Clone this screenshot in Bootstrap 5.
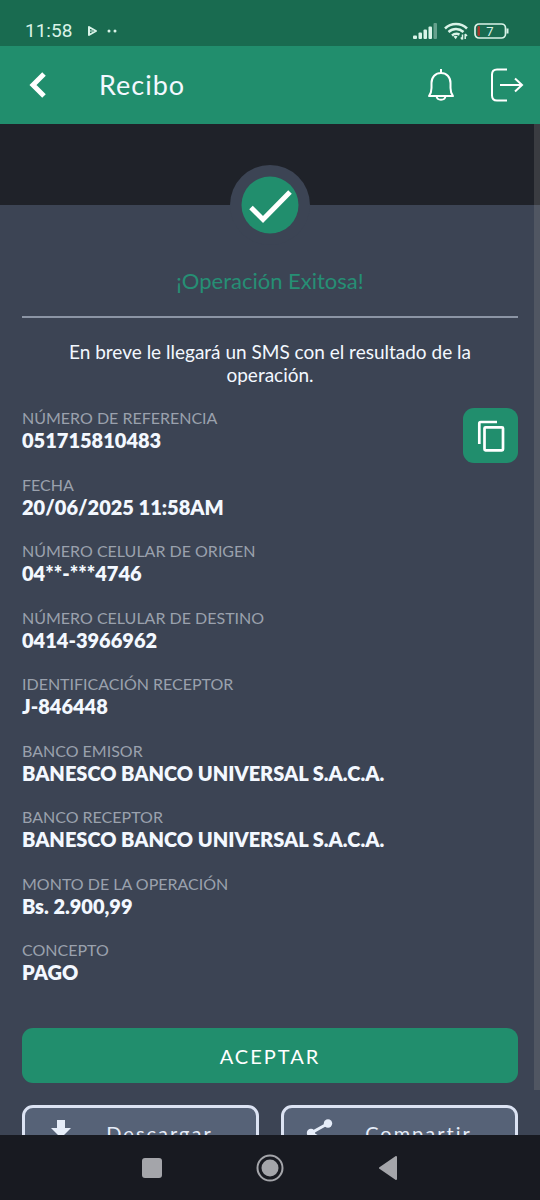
<!DOCTYPE html>
<html lang="es">
<head>
<meta charset="utf-8">
<meta name="viewport" content="width=device-width, initial-scale=1">
<title>Recibo</title>
<link href="https://cdn.jsdelivr.net/npm/bootstrap@5.3.0/dist/css/bootstrap.min.css" rel="stylesheet">
<style>
  body { font-family: Lato, sans-serif; background: #3c4454; color: #f3f8ff; }
  svg { display: block; flex: none; }
  .status-bar { height: 46px; padding: 16px 30px 0 25px; background: #196b50; color: #d9f3e8; font: 400 19px/30px Roboto, sans-serif; }
  .signals { gap: 5px; }
  .app-bar { height: 78px; padding: 0 15px 0 21px; background: #218e6d; }
  .app-bar h1 { font-size: 27px; line-height: 32px; margin-left: 44px; letter-spacing: 1px; font-weight: 400; }
  .app-bar .btn { color: #fff; border: 0; }
  .app-actions { gap: 34px; }
  .scroll-area { overflow-y: auto; scrollbar-width: none; }
  .scroll-area::-webkit-scrollbar { display: none; }
  .receipt { min-height: calc(100% + 25px); }
  .band { height: 81px; background: #1f2229; }
  .sheet { padding: 63px 22px 0; background: #3c4454; }
  .seal { top: -40px; width: 80px; height: 80px; background: #3c4454; }
  .success { font-size: 22px; line-height: 26px; color: #268f74; font-weight: 400; }
  .rule { margin: 22px 0; border-top: 2px solid #8c95a5; opacity: 1; }
  .notice { font-size: 19px; line-height: 23px; }
  .gap-base { margin-top: 22px; }
  .details dt { font-size: 16px; line-height: 20px; font-weight: 400; color: #9aa1ad; }
  .details dd { font-size: 20px; line-height: 24px; font-weight: 800; margin: 0; }
  .copy-btn { width: 55px; height: 55px; border-radius: 11px; background: #218e6d; color: #fff; top: 0; right: 0; }
  .main-btn { height: 55px; border-radius: 11px; letter-spacing: 2px; font-size: 20px; color: #fff; background: #218e6d; margin-top: 44px; }
  .side-btns { --bs-gutter-x: 22px; }
  .side-btn { height: 55px; border-radius: 11px; letter-spacing: 2px; font-size: 20px; color: #e6edf9; background: #566277; border: 3px solid #dce3f3; padding: 0 16px 0 20px; }
  .btn.main-btn:hover, .btn.copy-btn:hover { background: #1c7d60; color: #fff; }
  .thumb { top: 0; right: 0; width: 6px; height: calc(100% - 45px); background: #8a8a8a40; }
  .system-nav { height: 65px; background: #181a21; gap: 70px; }
  .system-nav button { width: 48px; height: 48px; color: #a4a5aa; }
</style>
</head>
<body class="vh-100 d-flex flex-column overflow-hidden">

<div class="status-bar d-flex align-items-center">
  <span>11:58</span>
  <svg class="ms-3" width="9" height="10" viewBox="0 0 9 10" fill="none" stroke="currentColor" stroke-width="2" stroke-linejoin="round"><path d="M1 1v8l7-4z"/><path d="M1 5h4" stroke-width="1"/></svg>
  <svg class="ms-2" width="16" height="4" viewBox="0 0 16 4" fill="currentColor"><circle cx="4" cy="2" r="1.500"/><circle cx="10" cy="2" r="1.500"/></svg>
  <div class="signals d-flex align-items-center ms-auto">
    <svg width="25" height="16" viewBox="0 0 25 16" fill="currentColor"><rect x="0" y="12.500" width="4" height="3.500" rx="1"/><rect x="5.500" y="9.500" width="3.500" height="6.500" rx="1"/><rect x="10.500" y="6.500" width="3.500" height="9.500" rx="1"/><rect x="15.500" y="3.500" width="3.500" height="12.500" rx="1"/><rect x="20.500" y="0" width="3.500" height="16" rx="1" opacity=".4"/></svg>
    <svg width="26" height="18" viewBox="0 0 26 18" fill="none" stroke="currentColor" stroke-width="2.500"><path d="M2 6.500C8 .500 18 .500 24 6.500M5.500 10c4.500-4 10.500-4 15 0M9 13.500c2.500-2 5-2 7.500-1"/><path d="M10.500 14.500q2.500-1.500 4 0l-1.800 2.700z" fill="currentColor" stroke="none"/><path d="M19.500 12.500v5M17.800 15.500l1.700 2M22.200 12v5M22.200 12l1.800 2" stroke-width="1.500"/></svg>
    <svg width="36" height="16" viewBox="0 0 36 16" fill="none" stroke="currentColor" stroke-width="1.700"><rect x="1" y="1" width="30.500" height="14" rx="4"/><path d="M4 3.500h1.500v9H4z" fill="#a5382d" stroke="#a5382d" stroke-width="1"/><path d="M33.500 5.500v5" stroke-width="2"/><text x="16" y="12.500" font-size="13" text-anchor="middle" fill="currentColor" stroke="none">7</text></svg>
  </div>
</div>

<header class="app-bar d-flex align-items-center">
  <button class="btn p-2" type="button" aria-label="Volver"><svg width="18" height="26" viewBox="0 0 18 26" fill="none" stroke="currentColor" stroke-width="5"><path d="M15 2L4 13l11 11"/></svg></button>
  <h1 class="mb-0">Recibo</h1>
  <div class="app-actions d-flex align-items-center ms-auto">
    <button class="btn p-0" type="button" aria-label="Notificaciones"><svg width="28" height="34" viewBox="0 0 28 34" fill="none" stroke="currentColor" stroke-width="2" stroke-linejoin="round"><path d="M14 1v4M2 28c2-2.500 2.500-4 2.500-8v-5c0-6 4-10 9.500-10s9.500 4 9.500 10v5c0 4 .500 5.500 2.500 8zM9.500 28c.500 5 8.500 5 9 0"/></svg></button>
    <button class="btn p-0" type="button" aria-label="Salir"><svg width="36" height="34" viewBox="0 0 36 34" fill="none" stroke="currentColor" stroke-width="2"><path d="M18 1.500H8q-5 0-5 5v21q0 5 5 5h10M11 17h22M26 10.500l7 6.500-7 6.500"/></svg></button>
  </div>
</header>

<div class="flex-grow-1 position-relative overflow-hidden">
  <main class="scroll-area h-100">
    <div class="receipt d-flex flex-column h-100">
      <div class="band flex-shrink-0"></div>
      <section class="sheet flex-grow-1 d-flex flex-column position-relative">
        <div class="seal position-absolute start-50 translate-middle-x rounded-circle d-flex align-items-center justify-content-center">
          <svg width="58" height="58" viewBox="0 0 58 58"><circle cx="29" cy="29" r="28.500" fill="#218e6d"/><path d="M10 31.500l12 12L49 16" fill="none" stroke="#fff" stroke-width="5"/></svg>
        </div>
        <h2 class="success text-center mb-0">¡Operación Exitosa!</h2>
        <hr class="rule">
        <p class="notice text-center mb-0 px-4">En breve le llegará un SMS con el resultado de la operación.</p>
        <div class="gap-base position-relative flex-grow-1 d-flex flex-column">
          <dl class="details mb-0 flex-grow-1 d-flex flex-column justify-content-between">
            <div><dt>NÚMERO DE REFERENCIA</dt><dd>051715810483</dd></div>
            <div><dt>FECHA</dt><dd>20/06/2025 11:58AM</dd></div>
            <div><dt>NÚMERO CELULAR DE ORIGEN</dt><dd>04**-***4746</dd></div>
            <div><dt>NÚMERO CELULAR DE DESTINO</dt><dd>0414-3966962</dd></div>
            <div><dt>IDENTIFICACIÓN RECEPTOR</dt><dd>J-846448</dd></div>
            <div><dt>BANCO EMISOR</dt><dd>BANESCO BANCO UNIVERSAL S.A.C.A.</dd></div>
            <div><dt>BANCO RECEPTOR</dt><dd>BANESCO BANCO UNIVERSAL S.A.C.A.</dd></div>
            <div><dt>MONTO DE LA OPERACIÓN</dt><dd>Bs. 2.900,99</dd></div>
            <div><dt>CONCEPTO</dt><dd>PAGO</dd></div>
          </dl>
          <button class="btn copy-btn position-absolute p-0 border-0 d-flex align-items-center justify-content-center" type="button" aria-label="Copiar"><svg width="28" height="32" viewBox="0 0 28 32" fill="none" stroke="currentColor" stroke-width="2.700"><rect x="7.500" y="7.300" width="18.500" height="23" rx="1"/><path d="M2.300 24V3.500q0-1.500 1.500-1.500H20"/></svg></button>
        </div>
        <button class="btn main-btn w-100 border-0 flex-shrink-0" type="button">ACEPTAR</button>
        <div class="row side-btns gap-base">
          <div class="col-6"><button class="btn side-btn w-100 d-flex align-items-center" type="button"><svg width="34" height="26" viewBox="0 0 34 26" fill="currentColor"><path d="M12 0h8v8h6L16 18 6 8h6zM6 21h20v3H6z"/></svg><span class="flex-grow-1 text-center">Descargar</span></button></div>
          <div class="col-6"><button class="btn side-btn w-100 d-flex align-items-center" type="button"><svg width="34" height="28" viewBox="0 0 34 28" fill="currentColor"><path d="M24 4.500L7 14l17 9.500" fill="none" stroke="currentColor" stroke-width="3"/><circle cx="24" cy="4.500" r="4.200"/><circle cx="7" cy="14" r="4.200"/><circle cx="24" cy="23.500" r="4.200"/></svg><span class="flex-grow-1 text-center">Compartir</span></button></div>
        </div>
      </section>
    </div>
  </main>
  <div class="thumb position-absolute"></div>
</div>

<nav class="system-nav d-flex align-items-center justify-content-center flex-shrink-0" aria-label="Sistema">
  <button class="btn p-0 border-0 d-flex align-items-center justify-content-center" type="button" aria-label="Recientes"><svg width="20" height="20"><rect width="20" height="20" rx="3" fill="currentColor"/></svg></button>
  <button class="btn p-0 border-0 d-flex align-items-center justify-content-center" type="button" aria-label="Inicio"><svg width="28" height="28" viewBox="0 0 28 28"><circle cx="14" cy="14" r="12.500" fill="none" stroke="currentColor" stroke-width="2"/><circle cx="14" cy="14" r="8.500" fill="currentColor"/></svg></button>
  <button class="btn p-0 border-0 d-flex align-items-center justify-content-center" type="button" aria-label="Atrás"><svg width="20" height="24" viewBox="0 0 20 24" fill="currentColor" stroke="currentColor" stroke-width="2" stroke-linejoin="round"><path d="M18 1v22L2 12z"/></svg></button>
</nav>

<script src="https://cdn.jsdelivr.net/npm/bootstrap@5.3.0/dist/js/bootstrap.bundle.min.js"></script>
</body>
</html>
